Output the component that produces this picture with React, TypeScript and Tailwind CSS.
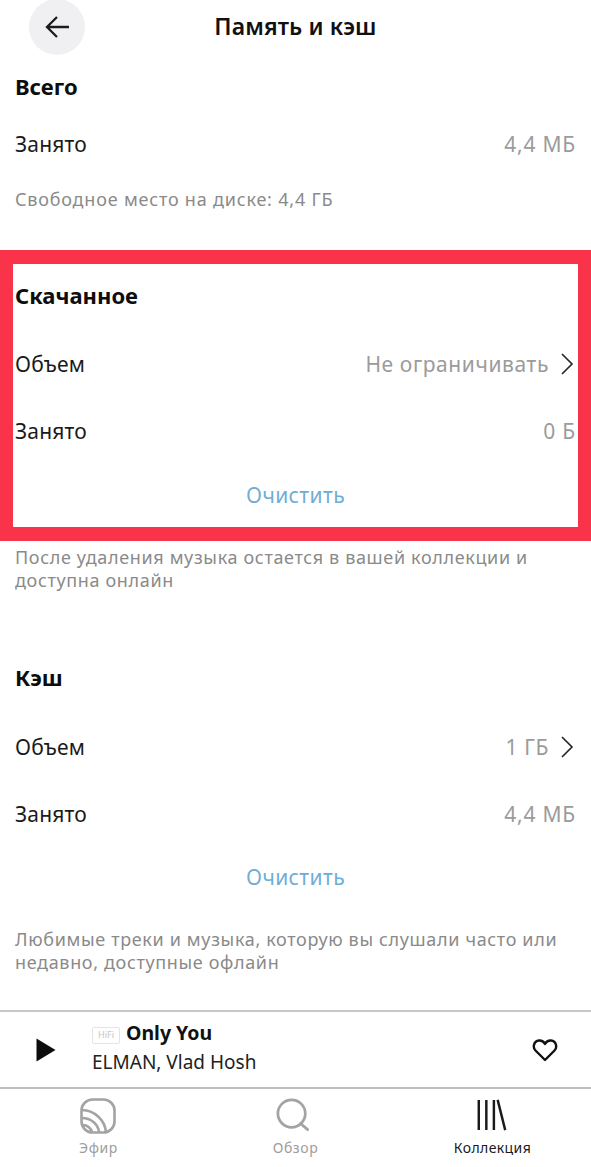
import React from "react";

const font = "font-['Noto_Sans','Liberation_Sans',sans-serif]";

function Row({ label, value, chevron, h }: { label: string; value: string; chevron?: boolean; h: string }) {
  return (
    <div className={`flex items-center justify-between ${h}`}>
      <span className="text-[21px] tracking-[0.2px] text-[#1a1a1a]">{label}</span>
      <span className={`flex items-center text-[21px] text-[#9b9b9b] ${chevron ? "tracking-[0.6px]" : "tracking-[0.8px]"}`}>
        {value}
        {chevron && (
          <svg width="14" height="22" viewBox="0 0 14 22" fill="none" stroke="#222" strokeWidth="1.6" className="ml-[11px] mr-[2px] -mt-[3px]">
            <path d="M2 1 L12 11 L2 21" />
          </svg>
        )}
      </span>
    </div>
  );
}

function Heading({ children, h }: { children: string; h: string }) {
  return <div className={`flex items-center text-[22px] font-bold text-[#0d0d0d] ${h}`}>{children}</div>;
}

function Clear({ h }: { h: string }) {
  return <div className={`flex items-center justify-center text-[21px] tracking-[0.4px] text-[#6fadd8] ${h}`}>Очистить</div>;
}

function Note({ children }: { children: React.ReactNode }) {
  return <p className="text-[18px] leading-[23px] tracking-[0.65px] text-[#8a8a8a]">{children}</p>;
}

export default function App() {
  return (
    <div className={`${font} flex h-[1167px] w-[591px] flex-col overflow-hidden bg-white`}>
      {/* header */}
      <div className="relative flex h-[56px] shrink-0 items-center justify-center">
        <div className="absolute left-[29px] top-[-1px] flex h-[56px] w-[56px] items-center justify-center rounded-full bg-[#f0f0f3]">
          <svg width="24" height="22" viewBox="0 0 24 22" fill="none" stroke="#1c1c1c" strokeWidth="2.3">
            <path d="M24 11 H2 M12 1 L2 11 L12 21" />
          </svg>
        </div>
        <span className="mb-[3px] text-[23px] font-semibold tracking-[0.1px] text-[#111]">Память и кэш</span>
      </div>

      <div className="px-[15px]">
        <Heading h="h-[61px]">Всего</Heading>
        <Row label="Занято" value="4,4 МБ" h="h-[55px]" />
        <div className="flex h-[55px] items-center text-[18px] tracking-[0.8px] text-[#8a8a8a]">Свободное место на диске: 4,4 ГБ</div>
      </div>

      {/* highlighted block */}
      <div className="mt-[23px] h-[291px] shrink-0 border-x-[13px] border-y-[14px] border-[#f93349] px-[2px]">
        <Heading h="h-[62px]">Скачанное</Heading>
        <Row label="Объем" value="Не ограничивать" chevron h="h-[78px]" />
        <Row label="Занято" value="0 Б" h="h-[56px]" />
        <Clear h="h-[67px] pt-[5px]" />
      </div>

      <div className="mt-[5px] px-[15px]">
        <Note>
          После удаления музыка остается в вашей коллекции и
          <br />
          доступна онлайн
        </Note>
        <Heading h="mt-[48px] h-[74px]">Кэш</Heading>
        <Row label="Объем" value="1 ГБ" chevron h="h-[68px]" />
        <Row label="Занято" value="4,4 МБ" h="h-[66px]" />
        <Clear h="h-[60px]" />
        <div className="mt-[20px]">
          <Note>
            Любимые треки и музыка, которую вы слушали часто или
            <br />
            недавно, доступные офлайн
          </Note>
        </div>
      </div>

      <div className="flex-1" />

      {/* player */}
      <div className="flex h-[79px] shrink-0 items-center border-y-2 border-b-[#bdbdbd] border-t-[#c8c8c8] pl-[36px] pr-[33px]">
        <svg width="20" height="24" viewBox="0 0 20 24" fill="#0d0d0d">
          <path d="M0.5 0.5 L19.5 12 L0.5 23.5 Z" />
        </svg>
        <div className="ml-[36px] flex-1">
          <div className="flex items-center">
            <span className="mt-[5px] flex h-[17px] w-[28px] items-center justify-center rounded-[2px] border border-[#e4e4e4] text-[9px] text-[#c4c4c4]">HiFi</span>
            <span className="ml-[6px] text-[19.5px] leading-[25px] font-bold text-[#111]">Only You</span>
          </div>
          <div className="text-[19px] leading-[34px] text-[#222]">ELMAN, Vlad Hosh</div>
        </div>
        <svg width="26" height="24" viewBox="0 0 26 24" fill="none" stroke="#111" strokeWidth="2.4" strokeLinejoin="round">
          <path d="M13 22 L3.5 12.5 C0.5 9.5 1.5 3 7 2.5 C10 2.3 12 4 13 6 C14 4 16 2.3 19 2.5 C24.5 3 25.5 9.5 22.5 12.5 Z" />
        </svg>
      </div>

      {/* tab bar */}
      <div className="grid h-[78px] shrink-0 grid-cols-[197px_197px_197px] pt-[9px]">
        <div className="flex flex-col items-center">
          <svg width="36" height="36" viewBox="0 0 36 36" fill="none" stroke="#a3a3a3" strokeWidth="2.6" className="-ml-[2px]">
            <rect x="1.5" y="1.5" width="33" height="33" rx="11" />
            <path d="M2 12 C14 12 25 22 26 34 M2 20 C11 20 18 26 19 34 M3 27 C7 27 11 30 12 34" />
          </svg>
          <span className="mt-[5px] text-[14px] leading-[18px] tracking-[0.6px] text-[#9d9d9d]">Эфир</span>
        </div>
        <div className="flex flex-col items-center">
          <svg width="34" height="34" viewBox="0 0 36 36" fill="none" stroke="#a3a3a3" strokeWidth="2.9" className="-ml-[6px] mb-[2px]">
            <circle cx="16.5" cy="16.5" r="14.5" />
            <path d="M26 27 L33.5 33.5" strokeLinecap="round" />
          </svg>
          <span className="mt-[5px] text-[14px] leading-[18px] tracking-[0.6px] text-[#9d9d9d]">Обзор</span>
        </div>
        <div className="flex flex-col items-center">
          <svg width="32" height="34" viewBox="0 0 32 36" fill="none" stroke="#1a1a1a" strokeWidth="2.6" className="-ml-[2px] mb-[2px]">
            <path d="M2 2 V34 M10 2 V34 M18 2 V34 M22 2 L30 34" />
          </svg>
          <span className="mt-[5px] text-[14px] leading-[18px] tracking-[0.4px] text-[#1a1a1a]">Коллекция</span>
        </div>
      </div>
    </div>
  );
}
